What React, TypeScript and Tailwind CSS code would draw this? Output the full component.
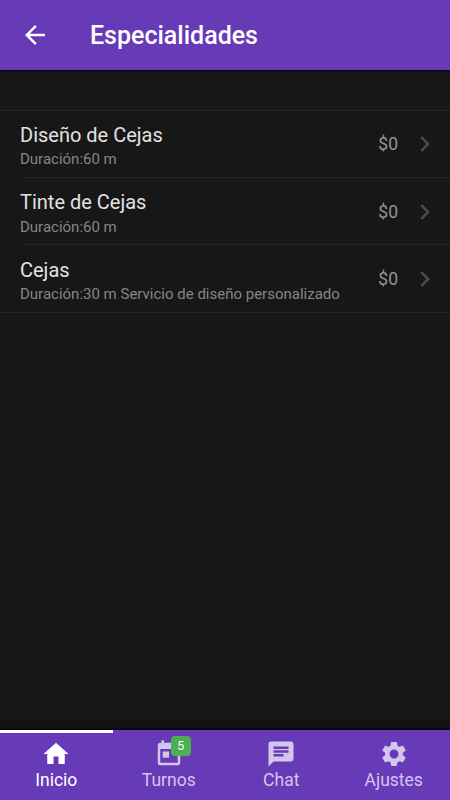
import React from 'react';
import type { IconType } from 'react-icons';
import { MdArrowBack, MdChat, MdHome, MdSettings, MdToday } from 'react-icons/md';

interface Specialty {
    name: string;
    detail: string;
    price: string;
}

interface Tab {
    label: string;
    icon: IconType;
    active?: boolean;
    badge?: number;
}

const specialties: Specialty[] = [
    { name: 'Diseño de Cejas', detail: 'Duración:60 m', price: '$0' },
    { name: 'Tinte de Cejas', detail: 'Duración:60 m', price: '$0' },
    { name: 'Cejas', detail: 'Duración:30 m Servicio de diseño personalizado', price: '$0' },
];

const tabs: Tab[] = [
    { label: 'Inicio', icon: MdHome, active: true },
    { label: 'Turnos', icon: MdToday, badge: 5 },
    { label: 'Chat', icon: MdChat },
    { label: 'Ajustes', icon: MdSettings },
];

const SpecialtyRow: React.FC<{ item: Specialty }> = ({ item }) => (
    <li className="group pl-5 first:-mt-px last:pl-0">
        <div className="flex h-[67.5px] items-center border-b border-[#232323] pt-[2px] pr-5 group-last:pl-5">
            <div className="min-w-0 flex-1 pt-[3.5px]">
                <div className="text-[20px] leading-[26px] text-[#e2e2e2]">{item.name}</div>
                <div className="pt-[0.5px] text-[15px] leading-[22px] text-[#85858a]">{item.detail}</div>
            </div>
            <span className="text-[17.5px] leading-6 text-[#949494]">{item.price}</span>
            <svg className="ml-[22px] h-4 w-[10px]" viewBox="0 0 10 16" fill="none" stroke="#4b4b4b" strokeWidth={2.5}>
                <path d="M1.3 1.2L8.1 8L1.3 14.8" />
            </svg>
        </div>
    </li>
);

const TabLink: React.FC<{ tab: Tab }> = ({ tab }) => {
    const Icon = tab.icon;
    return (
        <a className={`flex flex-1 flex-col items-center pt-[8.5px] ${tab.active ? 'text-white' : 'text-[#d3c5eb]'}`}>
            <span className="relative">
                <Icon className="h-[30px] w-[30px]" />
                {tab.badge && (
                    <span className="absolute -top-[2.5px] left-[17px] flex h-5 w-5 items-center justify-center rounded-[4px] bg-[#4caf50] text-[12.5px] leading-none text-white">
                        {tab.badge}
                    </span>
                )}
            </span>
            <span className="-mt-[0.5px] text-[17.5px] leading-6">{tab.label}</span>
        </a>
    );
};

export default function App() {
    return (
        <div className="flex h-[800px] w-[450px] flex-col overflow-hidden bg-[#171717] font-['Roboto',sans-serif]">
            <header className="flex h-[70px] shrink-0 items-center bg-[#673ab7] pl-5 text-white">
                <MdArrowBack className="h-[30px] w-[30px]" />
                <h1 className="ml-10 pt-[2px] text-[25px] leading-[30px] font-medium">Especialidades</h1>
            </header>

            <main className="flex-1">
                {/* Shadow under the navbar */}
                <div className="h-10 bg-linear-to-b from-[#050505] via-[#141414] via-[5%] to-[#171717] to-[20%]" />
                <ul className="border-t border-[#232323]">
                    {specialties.map((item) => (
                        <SpecialtyRow key={item.name} item={item} />
                    ))}
                </ul>
            </main>

            {/* Shadow over the tab bar */}
            <div className="h-4 shrink-0 bg-linear-to-b from-[#171717] via-[#121212] via-[85%] to-[#040404]" />
            <nav className="h-[70px] shrink-0 bg-[#673ab7]">
                <div className="-mb-[2.5px] h-[2.5px] w-[112.5px] bg-white" />
                <div className="flex">
                    {tabs.map((tab) => (
                        <TabLink key={tab.label} tab={tab} />
                    ))}
                </div>
            </nav>
        </div>
    );
}
